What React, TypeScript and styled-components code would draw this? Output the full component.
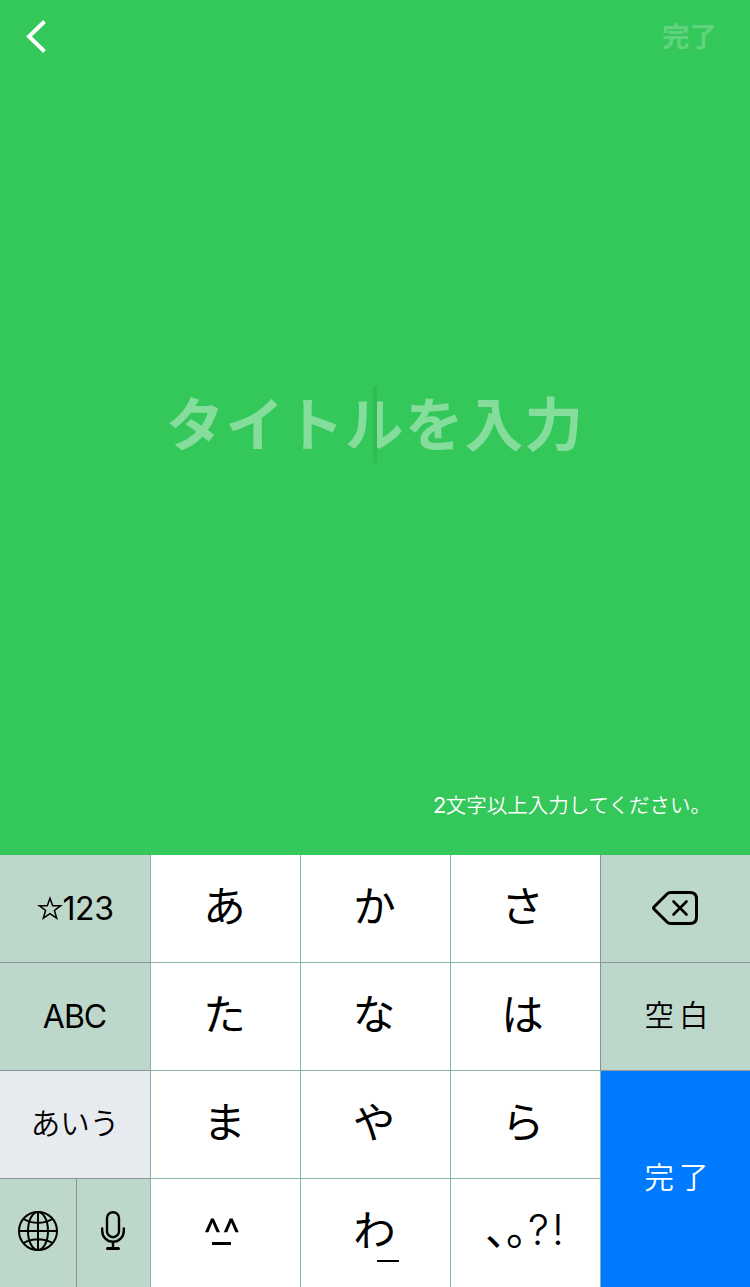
import React from "react";
import styled, { createGlobalStyle } from "styled-components";

const GlobalStyle = createGlobalStyle`
  * { box-sizing: border-box; }
  body {
    margin: 0;
    background: #34c759;
    font-family: Inter, "Noto Sans CJK JP", sans-serif;
  }
  button {
    margin: 0;
    border: 0;
    padding: 0;
    background: none;
    color: inherit;
    font: inherit;
  }
  svg { display: block; }
`;

const Screen = styled.main`
  display: flex;
  flex-direction: column;
  width: 750px;
  height: 1287px;
  overflow: hidden;
  background: #34c759;
  color: #fff;
`;

const NavBar = styled.header`
  display: flex;
  justify-content: space-between;
  align-items: center;
  height: 74px;
  padding: 0 33px 0 26px;
`;

const DoneButton = styled.button`
  padding-bottom: 4px;
  font-family: "Noto Sans CJK JP", sans-serif;
  font-size: 27.5px;
  line-height: 40px;
  font-weight: 700;
  color: rgba(255, 255, 255, 0.23);
`;

const Editor = styled.section`
  flex: 1;
  display: flex;
  justify-content: center;
  align-items: center;
  padding-bottom: 11px;
`;

const TitleField = styled.div`
  position: relative;
  height: 77px;
  font-family: "Noto Sans CJK JP", sans-serif;
  font-size: 58.5px;
  letter-spacing: 1.3px;
  line-height: 69px;
  font-weight: 700;
  white-space: nowrap;
  color: rgba(255, 255, 255, 0.4);
`;

const Caret = styled.span`
  position: absolute;
  top: 0;
  left: 50%;
  width: 4px;
  height: 77px;
  margin-left: -2px;
  background: #31bb54;
`;

const Hint = styled.p`
  margin: 0;
  height: 70px;
  padding-right: 39px;
  text-align: right;
  font-size: 20.5px;
  line-height: 38px;
  font-weight: 350;
  font-family: "Noto Sans CJK JP", sans-serif;
`;

const HintCount = styled.span`
  font-family: Inter, sans-serif;
  font-size: 22px;
  font-weight: 400;
  letter-spacing: -0.8px;
`;

const Keyboard = styled.div`
  display: grid;
  grid-template-columns: repeat(5, 150px);
  grid-template-rows: repeat(4, 108px);
  color: #000;
`;

const Key = styled.button<{ $last?: boolean }>`
  display: flex;
  justify-content: center;
  align-items: center;
  border-left: 1px solid #88b5a0;
  border-bottom: ${(p) => (p.$last ? "0" : "1px solid #88b5a0")};
  white-space: nowrap;
`;

const KanaKey = styled(Key)<{ $shift?: number }>`
  background: #fff;
  padding: 0 ${(p) => 2 + (p.$shift ?? 0)}px 10px 0;
  font-family: "Noto Sans CJK JP", sans-serif;
  font-size: 42.5px;
  line-height: 60px;
`;

const FaceKey = styled(Key)`
  background: #fff;
  padding: 0 8px 3px 0;
`;

const SideKey = styled(Key)<{ $first?: boolean; $active?: boolean }>`
  background: ${(p) => (p.$active ? "#e7ebf0" : "#bdd7ca")};
  border-left: ${(p) => (p.$first ? "0" : "1px solid #8e929f")};
  border-bottom-color: #8e929f;
  font-size: 32px;
  line-height: 44px;
`;

const IconKey = styled(SideKey)`
  padding: 0 2px 2px 0;
`;

const GlobeKey = styled(SideKey)`
  padding-bottom: 4px;
`;

const MicKey = styled(SideKey)`
  padding: 0 2px 4px 0;
`;

const LatinLabel = styled.span`
  letter-spacing: -1px;
  margin-right: 1px;
`;

const DigitLabel = styled.span`
  letter-spacing: -0.5px;
`;

const ThinLabel = styled.span<{ $gap?: number }>`
  padding-bottom: 8px;
  padding-left: ${(p) => (p.$gap ? 2 : 0)}px;
  font-family: "Noto Sans CJK JP", sans-serif;
  font-weight: 350;
  font-size: 29.5px;
  letter-spacing: ${(p) => p.$gap ?? 0}px;
  margin-right: ${(p) => -(p.$gap ?? 0)}px;
`;

const ReturnKey = styled(SideKey)`
  grid-row: span 2;
  background: #007aff;
  border-left-color: #88b5a0;
  color: #fff;
`;

const SplitCell = styled.div`
  display: grid;
  grid-template-columns: 76px 74px;
`;

const StarDigits = styled.span`
  display: flex;
  align-items: center;
`;

const WaLabel = styled.span`
  position: relative;
`;

const WaBar = styled.span`
  position: absolute;
  left: 24px;
  top: 62px;
  width: 22px;
  height: 2px;
  background: #000;
`;

const PunctRow = styled.span`
  display: flex;
  align-items: baseline;
`;

const Comma = styled.span`
  width: 21px;
  font-feature-settings: "halt";
`;

const Marks = styled.span`
  padding-left: 1px;
  font-family: Inter, sans-serif;
  font-size: 42px;
  font-weight: 350;
  letter-spacing: 3px;
  margin-right: -3px;
`;

const BackIcon = () => (
  <svg width="22" height="34" viewBox="0 0 22 34" fill="none" stroke="#fff" strokeWidth="4">
    <path d="M18.5 1.5 3 16.5l15.5 15" />
  </svg>
);

const StarIcon = () => (
  <svg width="26" height="28" viewBox="0 0 26 28" fill="none" stroke="#000" strokeWidth="1.5">
    <path d="M13 3.2 15.7 10.7H23.7L17.4 15.5 19.7 23.2 13 18.6 6.3 23.2 8.6 15.5 2.3 10.7H10.3Z" />
  </svg>
);

const DeleteIcon = () => (
  <svg width="46" height="34" viewBox="0 0 46 34" fill="none" stroke="#000" strokeWidth="3" strokeLinecap="round" strokeLinejoin="round">
    <path d="M18.5 1.5H38Q44.5 1.5 44.5 8V26Q44.5 32.5 38 32.5H18.5Q16.5 32.5 15 31L2.2 18.2Q1 17 2.2 15.8L15 3Q16.5 1.5 18.5 1.5Z" />
    <path d="m21.5 10.5 13 13m0-13-13 13" strokeWidth="2.6" />
  </svg>
);

const GlobeIcon = () => (
  <svg width="40" height="40" viewBox="0 0 40 40" fill="none" stroke="#000" strokeWidth="2">
    <circle cx="20" cy="20" r="19" />
    <ellipse cx="20" cy="20" rx="10" ry="19" />
    <path d="M20 1v38M1 20h38M5.5 8Q12 11.8 20 11.8T34.5 8M5.5 32Q12 28.2 20 28.2T34.5 32" />
  </svg>
);

const MicIcon = () => (
  <svg width="24" height="40" viewBox="0 0 24 40" fill="none" stroke="#000" strokeWidth="2.4" strokeLinecap="round">
    <rect x="6" y="1.2" width="12" height="25" rx="6" />
    <path d="M1.2 17.5V20a10.8 10.8 0 0 0 21.6 0V17.5M12 31v6" />
    <path d="M6.5 37.5h11" strokeWidth="3" />
  </svg>
);

const FaceIcon = () => (
  <svg width="34" height="28" viewBox="0 0 34 28" fill="#000">
    <path d="M0 14.3 6 .5H8.8L15 14.3H11.6L7.4 4.4 3.4 14.3ZM18.8 14.3 24.8 .5H27.6L33.8 14.3H30.4L26.2 4.4 22.2 14.3Z" />
    <path d="M7 24h19v3H7z" />
  </svg>
);

export default function App() {
  return (
    <Screen>
      <GlobalStyle />
      <NavBar>
        <button aria-label="戻る"><BackIcon /></button>
        <DoneButton>完了</DoneButton>
      </NavBar>
      <Editor>
        <TitleField>タイトルを入力<Caret /></TitleField>
      </Editor>
      <Hint><HintCount>2</HintCount>文字以上入力してください。</Hint>
      <Keyboard>
        <SideKey $first><StarDigits><StarIcon /><DigitLabel>123</DigitLabel></StarDigits></SideKey>
        <KanaKey>あ</KanaKey>
        <KanaKey>か</KanaKey>
        <KanaKey $shift={4}>さ</KanaKey>
        <IconKey aria-label="削除"><DeleteIcon /></IconKey>

        <SideKey $first><LatinLabel>ABC</LatinLabel></SideKey>
        <KanaKey>た</KanaKey>
        <KanaKey $shift={1}>な</KanaKey>
        <KanaKey $shift={4}>は</KanaKey>
        <SideKey><ThinLabel $gap={5}>空白</ThinLabel></SideKey>

        <SideKey $first $active><ThinLabel>あいう</ThinLabel></SideKey>
        <KanaKey>ま</KanaKey>
        <KanaKey $shift={1}>や</KanaKey>
        <KanaKey $shift={3}>ら</KanaKey>
        <ReturnKey $last><ThinLabel $gap={5}>完了</ThinLabel></ReturnKey>

        <SplitCell>
          <GlobeKey $first $last aria-label="地球儀"><GlobeIcon /></GlobeKey>
          <MicKey $last aria-label="音声入力"><MicIcon /></MicKey>
        </SplitCell>
        <FaceKey $last aria-label="顔文字"><FaceIcon /></FaceKey>
        <KanaKey $last><WaLabel>わ<WaBar /></WaLabel></KanaKey>
        <KanaKey $last>
          <PunctRow>
            <Comma>、</Comma>
            <Comma>。</Comma>
            <Marks>?!</Marks>
          </PunctRow>
        </KanaKey>
      </Keyboard>
    </Screen>
  );
}
